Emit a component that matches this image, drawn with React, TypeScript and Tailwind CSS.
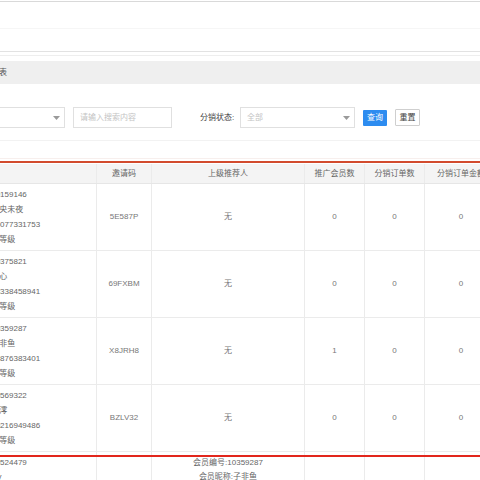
import React from 'react';

type Row = {
  no: string;
  nick: string;
  phone: string;
  level: string;
  code: string;
  parent: string[];
  invites: string;
  orders: string;
  amount: string;
};

const rows: Row[] = [
  { no: '会员编号:10159146', nick: '会员昵称:夜央未夜', phone: '手机号码:15077331753', level: '会员等级:无等级', code: '5E587P', parent: ['无'], invites: '0', orders: '0', amount: '0' },
  { no: '会员编号:10375821', nick: '会员昵称:初心', phone: '手机号码:18338458941', level: '会员等级:无等级', code: '69FXBM', parent: ['无'], invites: '0', orders: '0', amount: '0' },
  { no: '会员编号:10359287', nick: '会员昵称:子非鱼', phone: '手机号码:13876383401', level: '会员等级:无等级', code: 'X8JRH8', parent: ['无'], invites: '1', orders: '0', amount: '0' },
  { no: '会员编号:10569322', nick: '会员昵称:浅澪', phone: '手机号码:15216949486', level: '会员等级:无等级', code: 'BZLV32', parent: ['无'], invites: '0', orders: '0', amount: '0' },
];

const cols = 'grid grid-cols-[147px_55px_153px_60px_60px_72px]';
const cell = 'flex items-center justify-center border-r border-[#ebebeb]';

function Caret() {
  return (
    <svg width="7" height="4" viewBox="0 0 7 4" className="shrink-0">
      <path d="M0 0h7L3.5 4z" fill="#9a9a9a" />
    </svg>
  );
}

export default function App() {
  return (
    <div
      className="relative w-[480px] h-[480px] overflow-hidden bg-white text-[8px] text-[#666]"
      style={{ fontFamily: '"Liberation Sans", "Noto Sans CJK SC", sans-serif' }}
    >
      {/* 顶部区域 */}
      <div className="h-px" />
      <div className="h-px bg-[#d9d9d9]" />
      <div className="h-[26px]" />
      <div className="h-px bg-[#f6f6f6]" />
      <div className="h-[22px]" />
      <div className="h-px bg-[#e2e2e2]" />
      <div className="h-[3px]" />
      <div className="h-px bg-[#eeeeee]" />
      <div className="h-[5px]" />

      {/* 标题栏 */}
      <div className="h-[23px] bg-[#efefef] flex items-center">
        <span className="-ml-[33px] text-[#555] whitespace-nowrap">分销商列表</span>
      </div>
      <div className="h-[23px]" />

      {/* 筛选 */}
      <div className="h-[21px] flex items-center -ml-[50px] whitespace-nowrap">
        <div className="w-[115px] h-[21px] border border-[#e0e0e0] flex items-center justify-end pr-[4px]">
          <Caret />
        </div>
        <div className="ml-[8px] w-[99px] h-[21px] border border-[#e0e0e0] flex items-center pl-[6px] text-[#c4c4c4]">
          请输入搜索内容
        </div>
        <div className="ml-[28px] w-[40px] text-[#444]">分销状态:</div>
        <div className="w-[115px] h-[21px] border border-[#e0e0e0] flex items-center justify-between pl-[6px] pr-[4px] text-[#c4c4c4]">
          <span>全部</span>
          <Caret />
        </div>
        <button className="ml-[8px] w-[24px] h-[16px] bg-[#2d8cf0] text-white rounded-[1px] flex items-center justify-center">
          查询
        </button>
        <button className="ml-[8px] w-[25px] h-[17px] border border-[#cfcfcf] bg-white text-[#444] rounded-[1px] flex items-center justify-center">
          重置
        </button>
      </div>

      <div className="h-[12px]" />
      <div className="h-px bg-[#f2f2f2]" />
      <div className="h-[17px]" />
      <div className="h-px bg-[#f7efed]" />
      <div className="h-[5px]" />

      {/* 表格 */}
      <div className="-ml-[50px] w-[600px]">
        <div className={`${cols} h-[20px] bg-[#f4f4f4] border-b border-[#e6e6e6]`}>
          <div className="border-r border-[#ebebeb]" />
          <div className={cell}>邀请码</div>
          <div className={cell}>上级推荐人</div>
          <div className={cell}>推广会员数</div>
          <div className={cell}>分销订单数</div>
          <div className="flex items-center justify-center whitespace-nowrap">分销订单金额</div>
        </div>

        {rows.map((r) => (
          <div key={r.code} className={`${cols} h-[67px] border-b border-[#ebebeb] text-[#777]`}>
            <div className="flex flex-col justify-center pl-[7px] leading-[15px] border-r border-[#ebebeb] text-[#666] whitespace-nowrap overflow-hidden">
              <span>{r.no}</span>
              <span>{r.nick}</span>
              <span>{r.phone}</span>
              <span>{r.level}</span>
            </div>
            <div className={cell}>{r.code}</div>
            <div className={cell}>{r.parent[0]}</div>
            <div className={cell}>{r.invites}</div>
            <div className={cell}>{r.orders}</div>
            <div className="flex items-center justify-center">{r.amount}</div>
          </div>
        ))}

        <div className={`${cols} h-[67px] text-[#666]`}>
          <div className="flex flex-col pt-[4px] pl-[7px] leading-[14px] border-r border-[#ebebeb] whitespace-nowrap overflow-hidden">
            <span>会员编号:10524479</span>
            <span>会员昵称:Ivy</span>
          </div>
          <div className="border-r border-[#ebebeb]" />
          <div className="flex flex-col items-center pt-[4px] leading-[14px] border-r border-[#ebebeb] whitespace-nowrap">
            <span>会员编号:10359287</span>
            <span>会员昵称:子非鱼</span>
          </div>
          <div className="border-r border-[#ebebeb]" />
          <div className="border-r border-[#ebebeb]" />
          <div />
        </div>
      </div>

      {/* 红色标注框 */}
      <div className="absolute left-0 right-0 top-[161px] h-[2px] bg-[#d24b2e]" />
      <div className="absolute left-0 right-0 top-[455px] h-[2px] bg-[#e2261c]" />
    </div>
  );
}
